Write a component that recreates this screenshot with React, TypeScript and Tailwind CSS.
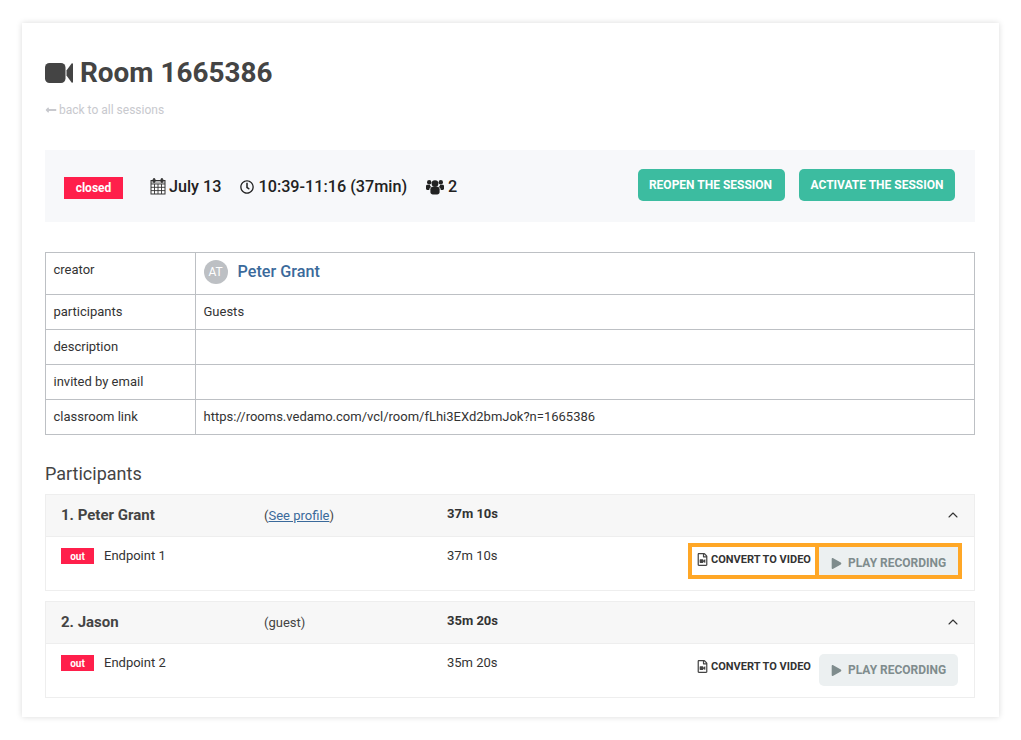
import React from "react";
import { FaRegClock, FaLongArrowAltLeft, FaPlay, FaRegFileVideo } from "react-icons/fa";
import { ChevronUp } from "lucide-react";

function Calendar() {
  return (
    <svg width="16" height="17" viewBox="0 0 16 17" className="mr-[3px]" fill="none" stroke="#333" strokeWidth="1">
      <rect x="1" y="2.5" width="14" height="13.5" fill="#fff" />
      <path d="M1 6h14M1 9.3h14M1 12.6h14M4.5 6v10M8 6v10M11.5 6v10" strokeWidth="0.9" />
      <rect x="3.2" y="0.5" width="1.8" height="4" rx="0.9" fill="#333" />
      <rect x="11" y="0.5" width="1.8" height="4" rx="0.9" fill="#333" />
      <rect x="1" y="2.5" width="14" height="3" fill="#333" stroke="none" opacity="0.35" />
    </svg>
  );
}

function Camera() {
  return (
    <svg width="28" height="20" viewBox="0 0 28 20" fill="#444">
      <rect x="0" y="0" width="20.5" height="20" rx="4.5" />
      <path d="M21.5 7.6 26.6.6c.4-.5 1.4-.3 1.4.5v17.8c0 .8-1 1-1.4.5l-5.1-7z" />
    </svg>
  );
}

function People() {
  return (
    <svg width="18" height="16" viewBox="0 0 18 16" fill="#222">
      <circle cx="9" cy="4.6" r="3.4" />
      <circle cx="3.2" cy="3.2" r="2.2" />
      <circle cx="14.8" cy="3.2" r="2.2" />
      <path d="M4.4 10.2c0-1.5 1-2.4 2.2-2.4h4.8c1.2 0 2.2.9 2.2 2.4V13c0 1.6-1 2.5-2.5 2.5H6.9c-1.5 0-2.5-.9-2.5-2.5z" />
      <path d="M0 7.2C0 6 .8 5.8 1.6 5.8h2.2c.3 1.2 1 1.9 1.6 2.3C4 8.6 3.3 9.5 3.2 11H1.3C.5 11 0 10.5 0 9.8z" />
      <path d="M18 7.2c0-1.2-.8-1.4-1.6-1.4h-2.2c-.3 1.2-1 1.9-1.6 2.3 1.4.5 2.1 1.4 2.2 2.9h1.9c.8 0 1.3-.5 1.3-1.2z" />
    </svg>
  );
}

function Row({ label, children, tall }: { label: string; children?: React.ReactNode; tall?: boolean }) {
  return (
    <tr className={tall ? "h-[42px]" : "h-[35px]"}>
      <td className="w-[150px] border border-[#bdc0c4] px-[7.5px] align-top pt-[8px] text-[#333]">{label}</td>
      <td className="border border-[#bdc0c4] px-[7.5px] align-top pt-[8px] text-[#333]">{children}</td>
    </tr>
  );
}

function Panel({
  name,
  note,
  time,
  endpoint,
  highlighted,
}: {
  name: string;
  note: React.ReactNode;
  time: string;
  endpoint: string;
  highlighted?: boolean;
}) {
  return (
    <div className="border border-[#eeeeee] h-[97px]">
      <div className="h-[42px] bg-[#f7f7f7] border-b border-[#eeeeee] flex items-center pl-[15px] pr-[13px]">
        <div className="w-[203px] text-[15px] font-bold text-[#444]">{name}</div>
        <div className="w-[183px] text-[13px] text-[#444]">{note}</div>
        <div className="flex-1 text-[13px] font-bold text-[#333] -mt-[3px]">{time}</div>
        <ChevronUp size={16} strokeWidth={1.6} color="#333" className="-mt-[2px]" />
      </div>
      <div className="flex pl-[15px] pr-[16px]">
        <div className="w-[43px] pt-[11px]">
          <div className="w-[33px] h-[16px] bg-[#ff1f4b] text-white text-[10px] font-bold flex items-center justify-center">out</div>
        </div>
        <div className="w-[343px] pt-[9px] text-[13px] text-[#333]">{endpoint}</div>
        <div className="flex-1 pt-[9px] text-[13px] text-[#333]">{time}</div>
        <div className="relative flex items-start mt-[10px]">
          <div className="h-[32px] w-[123px] flex items-start pt-[5px] pl-[4px] gap-[2px] text-[11px] font-bold text-[#333] whitespace-nowrap">
            <FaRegFileVideo size={13} className="mt-[1px]" color="#444" />
            CONVERT TO VIDEO
          </div>
          <div className={`ml-[4px] h-[32px] w-[139px] bg-[#ecf0f1] flex items-center pl-[12px] gap-[6px] text-[12px] font-bold text-[#7f8c8d] whitespace-nowrap ${highlighted ? "" : "rounded-[5px]"}`}>
            <FaPlay size={11} color="#7f8c8d" />
            PLAY RECORDING
          </div>
          {highlighted && (
            <div className="absolute -left-[4px] -top-[4px] w-[274px] h-[36px] border-[4px] border-[#ffa726]">
              <div className="ml-[123px] w-[4px] h-full bg-[#ffa726]" />
            </div>
          )}
        </div>
      </div>
    </div>
  );
}

export default function App() {
  return (
    <div className="h-[740px] bg-white pt-[23px] px-[22px] font-['Roboto',sans-serif] text-[#333]">
      <div className="w-[977px] h-[694px] bg-white shadow-[0_0_6px_rgba(0,0,0,0.15)] pl-[23px] pr-[24px] pt-[31px]">
        <h1 className="flex items-center gap-[7px] text-[27.9px] leading-[38px] font-bold text-[#444]">
          <Camera />
          Room 1665386
        </h1>
        <div className="mt-[9px] flex items-center gap-[2px] text-[12px] leading-[18px] text-[#c8c9ce]">
          <FaLongArrowAltLeft size={12} />
          back to all sessions
        </div>
        <div className="mt-[31px] h-[72px] bg-[#f7f8fa] flex items-center pl-[19px] pr-[20px] pt-[4px]">
          <div className="w-[59px] h-[22px] bg-[#ff1f4b] text-white text-[12px] font-bold flex items-center justify-center">closed</div>
          <div className="ml-[27px] -mt-[2px] flex items-center text-[16.2px] font-medium text-[#222]">
            <Calendar />
            July 13
          </div>
          <div className="ml-[19px] -mt-[2px] flex items-center gap-[4px] text-[16.2px] font-medium text-[#222]">
            <FaRegClock size={14} />
            10:39-11:16 (37min)
          </div>
          <div className="ml-[19px] -mt-[2px] flex items-center gap-[4px] text-[16.2px] font-medium text-[#222]">
            <People />
            2
          </div>
          <div className="ml-auto flex gap-[14px] -mt-[6px]">
            <div className="h-[32px] w-[147px] rounded-[5px] bg-[#3cbca0] text-white text-[12px] font-bold flex items-center justify-center pb-[1px] pr-[2px]">REOPEN THE SESSION</div>
            <div className="h-[32px] w-[156px] rounded-[5px] bg-[#3cbca0] text-white text-[12px] font-bold flex items-center justify-center pb-[1px]">ACTIVATE THE SESSION</div>
          </div>
        </div>
        <table className="mt-[30px] w-full border-collapse text-[13px] leading-[18px]">
          <tbody>
            <Row label="creator" tall>
              <div className="flex items-center gap-[10px] -mt-[1px]">
                <div className="w-[24px] h-[24px] rounded-full bg-[#bdc0c4] text-white text-[12px] flex items-center justify-center">AT</div>
                <span className="text-[16.2px] font-medium text-[#3b6a9b] -mt-[1px]">Peter Grant</span>
              </div>
            </Row>
            <Row label="participants">Guests</Row>
            <Row label="description" />
            <Row label="invited by email" />
            <Row label="classroom link">https://rooms.vedamo.com/vcl/room/fLhi3EXd2bmJok?n=1665386</Row>
          </tbody>
        </table>
        <h2 className="mt-[27px] text-[18px] leading-[24px] text-[#444]">Participants</h2>
        <div className="mt-[8px] flex flex-col gap-[10px]">
          <Panel
            name="1. Peter Grant"
            note={<>(<span className="underline text-[#3b6a9b]">See profile</span>)</>}
            time="37m 10s"
            endpoint="Endpoint 1"
            highlighted
          />
          <Panel name="2. Jason" note="(guest)" time="35m 20s" endpoint="Endpoint 2" />
        </div>
      </div>
    </div>
  );
}
